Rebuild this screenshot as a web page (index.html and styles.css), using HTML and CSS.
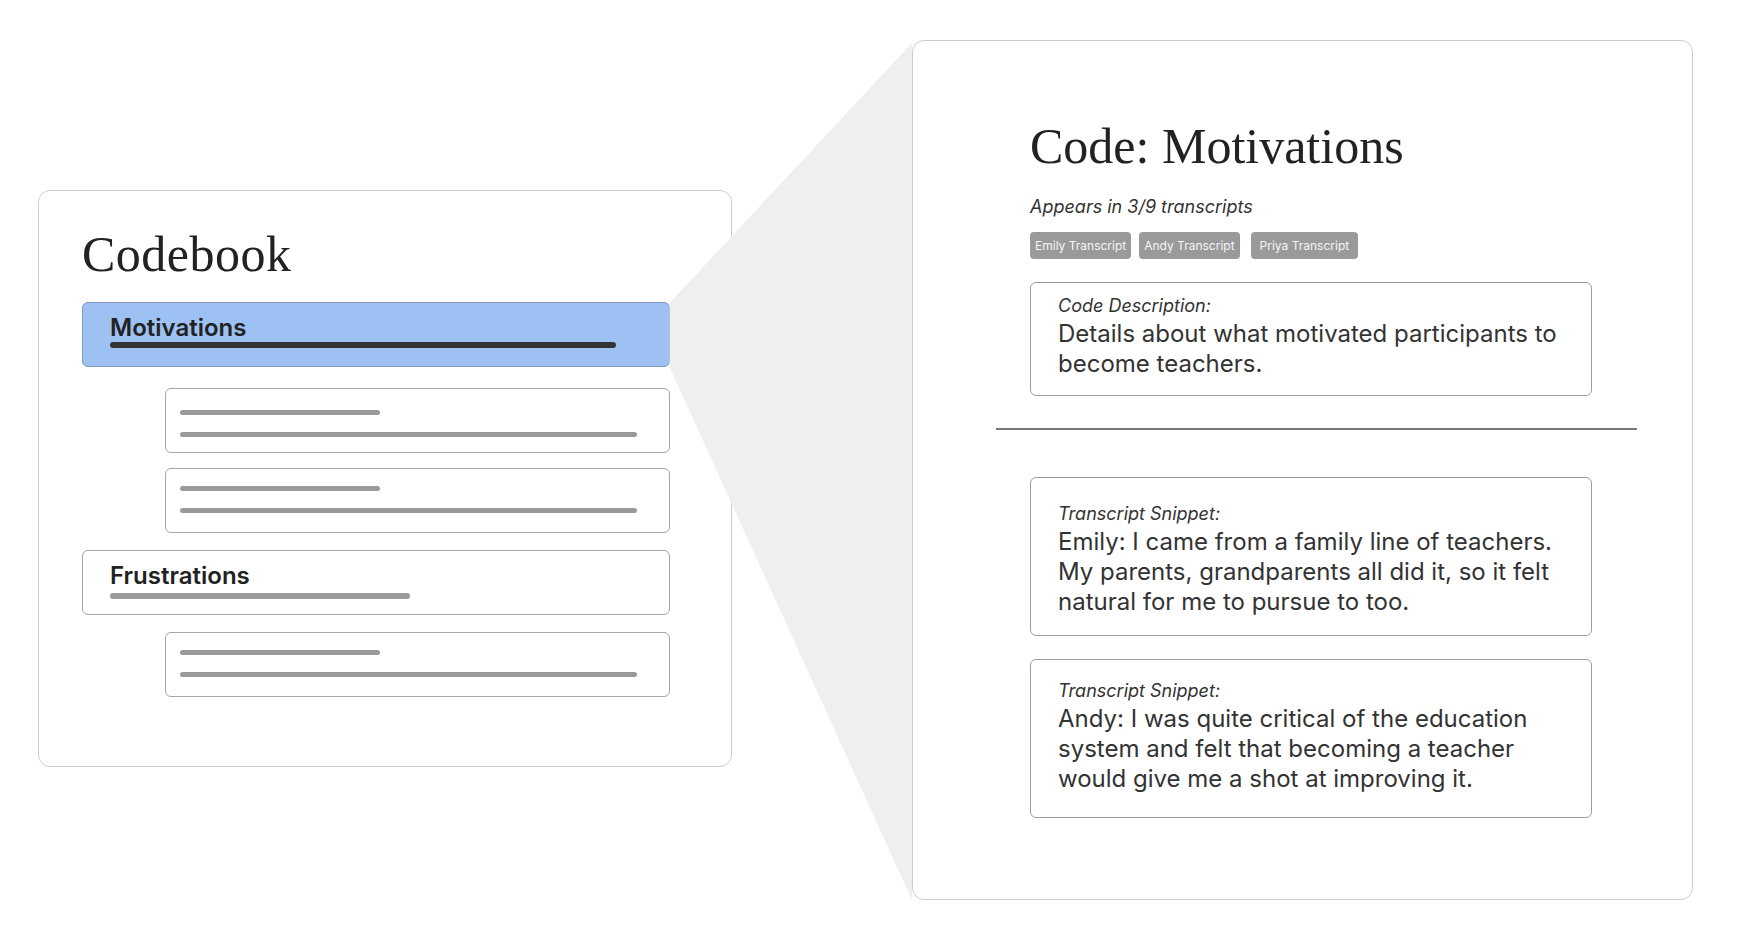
FILE: index.html
```html
<!DOCTYPE html>
<html lang="en">
<head>
<meta charset="utf-8">
<title>Codebook</title>
<link rel="stylesheet" href="styles.css">
</head>
<body>
<div class="stage">
  <svg class="zoom-wedge" width="1752" height="944" viewBox="0 0 1752 944" aria-hidden="true">
    <polygon points="669.5,303 912,43 912,900 669.5,367" fill="#efefef"/>
  </svg>

  <section class="panel codebook">
    <h1 class="panel-title">Codebook</h1>
    <div class="code-list">
      <div class="code-row is-active">
        <div class="code-name">Motivations</div>
        <div class="bar bar-dark"></div>
      </div>
      <div class="excerpt excerpt-lead">
        <span class="line line-short"></span>
        <span class="line line-long"></span>
      </div>
      <div class="excerpt">
        <span class="line line-short"></span>
        <span class="line line-long"></span>
      </div>
      <div class="code-row">
        <div class="code-name">Frustrations</div>
        <div class="bar bar-muted"></div>
      </div>
      <div class="excerpt">
        <span class="line line-short"></span>
        <span class="line line-long"></span>
      </div>
    </div>
  </section>

  <section class="panel detail">
    <h1 class="panel-title detail-title">Code: Motivations</h1>
    <p class="appears">Appears in 3/9 transcripts</p>
    <div class="tags">
      <span class="tag">Emily Transcript</span>
      <span class="tag">Andy Transcript</span>
      <span class="tag">Priya Transcript</span>
    </div>
    <div class="text-box description">
      <div class="box-label">Code Description:</div>
      <p class="box-body">Details about what motivated participants to<br>become teachers.</p>
    </div>
    <hr class="divider">
    <div class="text-box snippet">
      <div class="box-label">Transcript Snippet:</div>
      <p class="box-body">Emily: I came from a family line of teachers.<br>My parents, grandparents all did it, so it felt<br>natural for me to pursue to too.</p>
    </div>
    <div class="text-box snippet snippet-second">
      <div class="box-label">Transcript Snippet:</div>
      <p class="box-body">Andy: I was quite critical of the education<br>system and felt that becoming a teacher<br>would give me a shot at improving it.</p>
    </div>
  </section>
</div>
</body>
</html>
```

FILE: styles.css
```css
* {
  box-sizing: border-box;
}

html,
body {
  margin: 0;
  padding: 0;
  background: #ffffff;
}

body {
  font-family: Inter, "Noto Sans", sans-serif;
  color: #333333;
}

.stage {
  position: relative;
  width: 1752px;
  height: 944px;
  display: flex;
  align-items: flex-start;
  gap: 180px;
  padding: 40px 0 0 38px;
  overflow: hidden;
}

/* grey zoom cone joining the selected code to the detail panel */
.zoom-wedge {
  position: absolute;
  left: 0;
  top: 0;
  z-index: 1;
  pointer-events: none;
}

.panel {
  position: relative;
  background: #ffffff;
  border: 1px solid #cdcdcd;
  border-radius: 12px;
  flex: none;
}

.panel-title {
  margin: 0 0 20px;
  font-family: "Liberation Serif", "Times New Roman", serif;
  font-weight: 400;
  font-size: 50px;
  line-height: 56px;
  color: #222222;
}

/* ---------- codebook panel ---------- */

.codebook {
  z-index: 0;
  width: 694px;
  height: 577px;
  margin-top: 150px;
  padding: 35px 61px 0 43px;
}

.codebook .panel-title {
  letter-spacing: 0.5px;
}

.code-list {
  display: flex;
  flex-direction: column;
}

.code-list > * + * {
  margin-top: 17px;
}

.code-list > .is-active + .excerpt {
  margin-top: 21px;
}

.code-list > .excerpt + .excerpt {
  margin-top: 15px;
}

.code-row {
  height: 65px;
  padding: 11px 0 0 27px;
  border: 1px solid #a5a5a5;
  border-radius: 6px;
  background: #ffffff;
}

.code-row.is-active {
  background: #9dc1f3;
  border-color: #8397b6;
}

.code-name {
  font-weight: 600;
  font-size: 24px;
  line-height: 28px;
  color: #222222;
}

.bar {
  height: 6px;
  border-radius: 3px;
}

.bar-dark {
  width: 506px;
  margin-top: 0;
  background: #333333;
}

.bar-muted {
  width: 300px;
  margin-top: 3px;
  background: #9a9a9a;
}

.excerpt {
  height: 65px;
  margin-left: 83px;
  padding: 17px 0 0 14px;
  border: 1px solid #a5a5a5;
  border-radius: 6px;
  display: flex;
  flex-direction: column;
  gap: 17px;
}

.excerpt-lead {
  padding-top: 21px;
}

.line {
  display: block;
  height: 5px;
  border-radius: 3px;
  background: #9a9a9a;
}

.line-short {
  width: 200px;
}

.line-long {
  width: 457px;
}

/* ---------- detail panel ---------- */

.detail {
  z-index: 2;
  width: 781px;
  height: 860px;
  padding: 77px 0 0 117px;
}

.detail-title {
  margin-bottom: 22px;
}

.appears {
  margin: 0 0 14px;
  font-style: italic;
  font-size: 18px;
  line-height: 22px;
  color: #333333;
}

.tags {
  display: flex;
  gap: 8px;
  margin-bottom: 23px;
}

.tag {
  height: 27px;
  padding: 0 5px;
  border-radius: 4px;
  background: #9a9a9a;
  color: #f5f5f5;
  font-size: 12px;
  line-height: 27px;
  white-space: nowrap;
}

.tag + .tag + .tag {
  margin-left: 3px;
  padding: 0 9px;
}

.text-box {
  width: 562px;
  border: 1px solid #9d9d9d;
  border-radius: 6px;
  padding: 12px 10px 16px 27px;
}

.box-label {
  font-style: italic;
  font-size: 18px;
  line-height: 22px;
  color: #333333;
}

.box-body {
  margin: 2px 0 0;
  font-size: 24px;
  line-height: 30px;
  color: #333333;
  white-space: nowrap;
}

.divider {
  width: 641px;
  height: 2px;
  margin: 32px 0 47px -34px;
  border: 0;
  background: #777777;
}

.snippet {
  height: 159px;
  padding-top: 25px;
  margin-bottom: 23px;
}

.snippet-second {
  padding-top: 20px;
}
```
